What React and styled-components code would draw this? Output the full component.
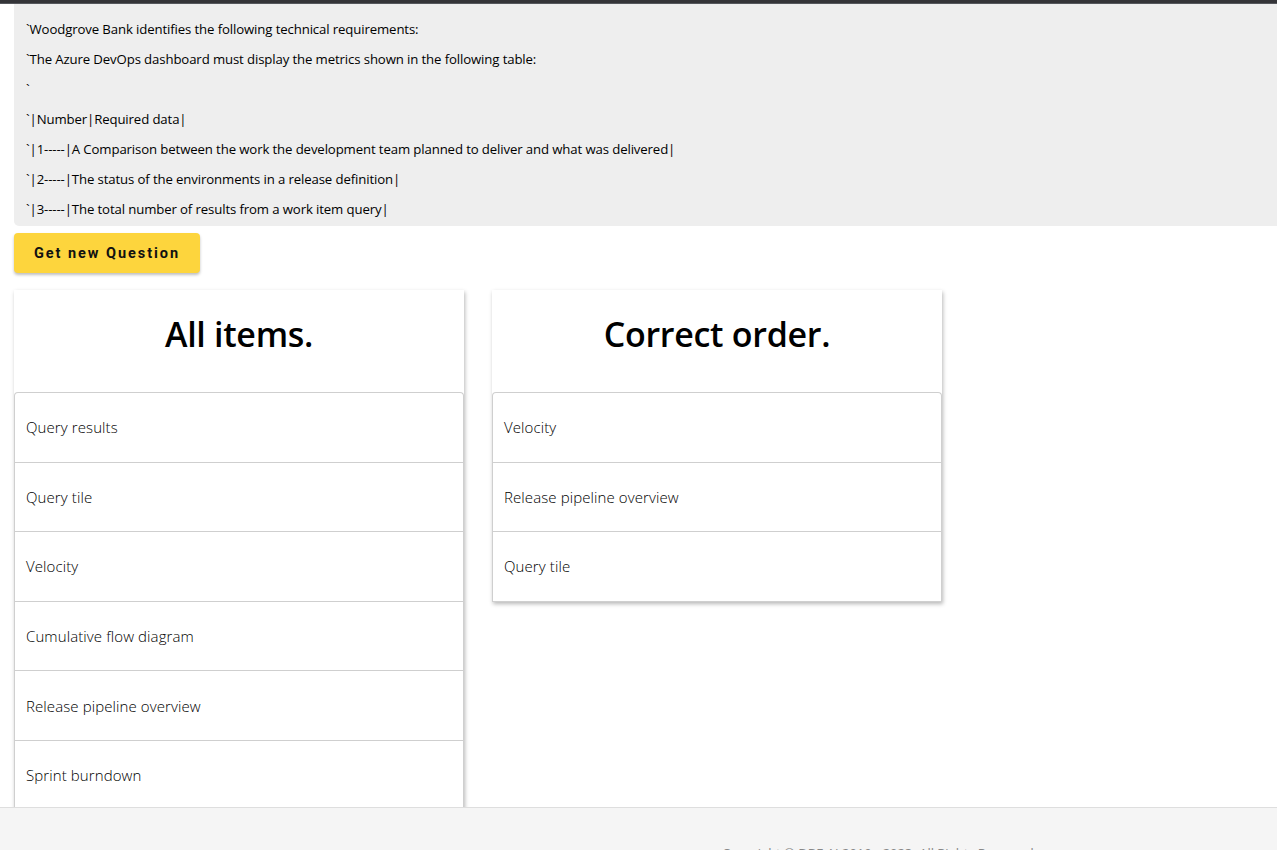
import React from "react";
import styled, { createGlobalStyle } from "styled-components";

const Global = createGlobalStyle`
  html, body { margin: 0; padding: 0; background: #fff; }
  body { font-family: "Open Sans", "Noto Sans", sans-serif; color: #000; }
  * { box-sizing: border-box; }
`;

const TopBar = styled.div`
  height: 4px;
  background: #343438;
  border-bottom: 1px solid #55575c;
`;

const Page = styled.main`
  padding: 0 0 80px 14px;
`;

const QuestionBox = styled.section`
  background: #eeeeee;
  border-bottom-left-radius: 5px;
  padding: 16px 12px 8px;
  display: flex;
  flex-direction: column;
  gap: 12px;
`;

const Line = styled.p`
  margin: 0;
  font-size: 13.2px;
  line-height: 18px;
  letter-spacing: -0.12px;
  white-space: pre;
`;

const NewButton = styled.button`
  display: block;
  margin-top: 7px;
  width: 186px;
  height: 40px;
  padding: 0;
  border: none;
  border-radius: 4px;
  background: #fdd53d;
  box-shadow: 0 2px 3px rgba(0, 0, 0, 0.25);
  font-family: Roboto, "Noto Sans", sans-serif;
  font-weight: 700;
  font-size: 14.5px;
  letter-spacing: 1.95px;
  color: #111;
  cursor: pointer;
`;

const Columns = styled.div`
  margin-top: 17px;
  display: flex;
  gap: 28px;
  align-items: flex-start;
`;

const Card = styled.div`
  width: 450px;
  background: #fff;
  box-shadow: 1px 2px 4px rgba(0, 0, 0, 0.28);
`;

const CardTitle = styled.h2`
  margin: 0;
  height: 102px;
  padding-top: 21px;
  text-align: center;
  font-family: "Open Sans", "Noto Sans", sans-serif;
  font-weight: 600;
  font-size: 34px;
  line-height: 46px;
  letter-spacing: -0.3px;
`;

const List = styled.ul`
  list-style: none;
  margin: 0;
  padding: 0;
  border: 1px solid #cfcfcf;
  border-bottom: none;
  border-radius: 4px 4px 0 0;
`;

const Item = styled.li`
  height: 69.6px;
  display: flex;
  align-items: center;
  padding: 0 11px;
  border-bottom: 1px solid #cfcfcf;
  font-size: 15px;
  font-weight: 300;
  letter-spacing: 0.1px;
  color: #000;
`;

const Footer = styled.footer`
  position: fixed;
  left: 0;
  right: 0;
  bottom: 0;
  height: 43px;
  background: #f5f5f5;
  border-top: 1px solid #dedede;
  overflow: hidden;
  padding: 36px 0 0 722px;
  font-size: 13px;
  color: #888;
  white-space: nowrap;
`;

const lines = [
  "`Woodgrove Bank identifies the following technical requirements:",
  "`The Azure DevOps dashboard must display the metrics shown in the following table:",
  "`",
  "`|Number|Required data|",
  "`|1-----|A Comparison between the work the development team planned to deliver and what was delivered|",
  "`|2-----|The status of the environments in a release definition|",
  "`|3-----|The total number of results from a work item query|",
];

const allItems = [
  "Query results",
  "Query tile",
  "Velocity",
  "Cumulative flow diagram",
  "Release pipeline overview",
  "Sprint burndown",
];

const correct = ["Velocity", "Release pipeline overview", "Query tile"];

export default function App() {
  return (
    <>
      <Global />
      <TopBar />
      <Page>
        <QuestionBox>
          {lines.map((l, i) => (
            <Line key={i}>{l}</Line>
          ))}
        </QuestionBox>
        <NewButton>Get new Question</NewButton>
        <Columns>
          <Card>
            <CardTitle>All items.</CardTitle>
            <List>
              {allItems.map((t) => (
                <Item key={t}>{t}</Item>
              ))}
            </List>
          </Card>
          <Card>
            <CardTitle>Correct order.</CardTitle>
            <List>
              {correct.map((t) => (
                <Item key={t}>{t}</Item>
              ))}
            </List>
          </Card>
        </Columns>
      </Page>
      <Footer>Copyright © DBE AI 2019 - 2023. All Rights Reserved.</Footer>
    </>
  );
}
